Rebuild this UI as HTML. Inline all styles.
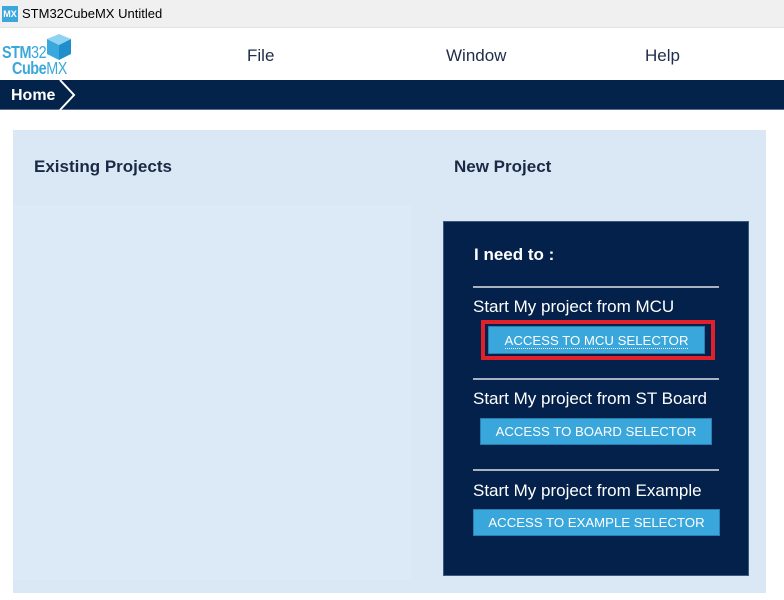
<!DOCTYPE html>
<html><head><meta charset="utf-8"><style>
*{margin:0;padding:0;box-sizing:border-box}
body{width:784px;height:600px;background:#fff;font-family:"Liberation Sans",Arial,sans-serif;position:relative;overflow:hidden}
.abs{position:absolute}
.tb{left:0;top:0;width:784px;height:28px;background:#f0f0f0;border-bottom:1px solid #e2e2e2}
.tb .ic{left:2px;top:6px;width:16px;height:16px;background:#3aa8dc;color:#fff;font-size:9px;font-weight:bold;text-align:center;line-height:16px}
.tb .t{left:22px;top:6px;font-size:13px;color:#000}
.menu{font-size:17px;color:#1f2d4a;top:46px}
.nav{left:0;top:80px;width:784px;height:30px;background:#03234b;border-bottom:1px solid #5a6f8c}
.nav .h{left:11px;top:7px;color:#fff;font-weight:bold;font-size:16px}
.panel{left:13px;top:130px;width:753px;height:463px;background:#dae8f5}
.left{left:13px;top:205px;width:398px;height:375px;background:#dce9f6}
.hd{font-weight:bold;font-size:17px;color:#1a2a44}
.dark{left:443px;top:221px;width:306px;height:355px;background:#03214a;border:1px solid #3b5a80}
.w{color:#fff}
.line{left:473px;width:246px;height:2px;background:#a8b3bf}
.btn{background:#39a7dc;color:#fff;font-size:13.2px;text-align:center;border:1px solid #2a7fb0}
.lg{font-size:16px;font-weight:bold;color:#3aa8dc;line-height:15px;letter-spacing:-0.5px;transform:scale(0.9,1.1);transform-origin:left top}
</style></head><body>
<div class="abs tb"><div class="abs ic">MX</div><div class="abs t">STM32CubeMX Untitled</div></div>
<div class="abs lg" style="left:2px;top:45px">STM<span style="font-weight:normal">32</span></div>
<div class="abs lg" style="left:12px;top:61px">Cube<span style="font-weight:normal">MX</span></div>
<svg class="abs" style="left:46px;top:33px" width="26" height="28" viewBox="0 0 26 28"><polygon points="13,1 25,6 13,12 1,6" fill="#8fd3f2"/><polygon points="1,6 13,12 13,27 1,21" fill="#3aa8dc"/><polygon points="13,12 25,6 25,21 13,27" fill="#1f8fcb"/></svg>
<div class="abs menu" style="left:247px">File</div>
<div class="abs menu" style="left:446px">Window</div>
<div class="abs menu" style="left:645px">Help</div>
<div class="abs nav"><div class="abs h">Home</div>
<svg class="abs" style="left:58px;top:0" width="20" height="31"><polyline points="2,0 16,15 2,30" fill="none" stroke="#fff" stroke-width="2"/></svg></div>
<div class="abs panel"></div>
<div class="abs left"></div>
<div class="abs hd" style="left:34px;top:157px">Existing Projects</div>
<div class="abs hd" style="left:454px;top:157px">New Project</div>
<div class="abs dark"></div>
<div class="abs w" style="left:474px;top:245px;font-size:17px;font-weight:bold">I need to :</div>
<div class="abs line" style="top:286px"></div>
<div class="abs w" style="left:473px;top:297px;font-size:17px">Start My project from MCU</div>
<div class="abs" style="left:481px;top:320px;width:234px;height:40px;border:4px solid #e0202a"></div>
<div class="abs btn" style="left:488px;top:326px;width:217px;height:28px;line-height:27px"><span style="border-bottom:1px dotted #fff">ACCESS TO MCU SELECTOR</span></div>
<div class="abs line" style="top:378px"></div>
<div class="abs w" style="left:473px;top:389px;font-size:17px">Start My project from ST Board</div>
<div class="abs btn" style="left:480px;top:418px;width:232px;height:27px;line-height:26px">ACCESS TO BOARD SELECTOR</div>
<div class="abs line" style="top:469px"></div>
<div class="abs w" style="left:473px;top:481px;font-size:17px">Start My project from Example</div>
<div class="abs btn" style="left:473px;top:509px;width:247px;height:27px;line-height:26px">ACCESS TO EXAMPLE SELECTOR</div>
</body></html>
